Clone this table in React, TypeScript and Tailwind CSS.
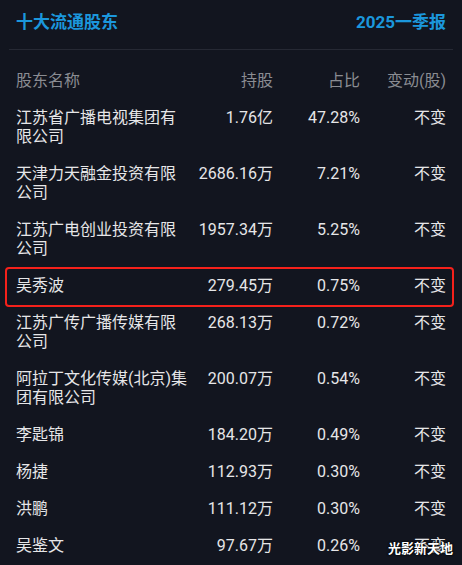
import React from "react";

const rows: [string, string, string, string, boolean?][] = [
  ["江苏省广播电视集团有限公司", "1.76亿", "47.28%", "不变"],
  ["天津力天融金投资有限公司", "2686.16万", "7.21%", "不变"],
  ["江苏广电创业投资有限公司", "1957.34万", "5.25%", "不变"],
  ["吴秀波", "279.45万", "0.75%", "不变", true],
  ["江苏广传广播传媒有限公司", "268.13万", "0.72%", "不变"],
  ["阿拉丁文化传媒(北京)集团有限公司", "200.07万", "0.54%", "不变"],
  ["李匙锦", "184.20万", "0.49%", "不变"],
  ["杨捷", "112.93万", "0.30%", "不变"],
  ["洪鹏", "111.12万", "0.30%", "不变"],
  ["吴鉴文", "97.67万", "0.26%", "不变"],
];

export default function App() {
  return (
    <div
      className="relative w-[462px] h-[565px] overflow-hidden bg-[#12151f]"
      style={{ fontFamily: 'Roboto, "Noto Sans CJK SC", sans-serif' }}
    >
      <div className="h-[49px] pb-[4px] px-4 flex items-center justify-between text-[17px] font-bold text-[#1b97dc]">
        <span>十大流通股东</span>
        <span>2025一季报</span>
      </div>
      <div className="mx-[9px] h-px bg-[#262934]" />
      <div className="mt-[12px] px-4 py-[9px] grid grid-cols-[175px_82px_87px_86px] text-[16px] leading-[19px] text-[#8a8c92]">
        <span>股东名称</span>
        <span className="text-right">持股</span>
        <span className="text-right">占比</span>
        <span className="text-right">变动(股)</span>
      </div>
      {rows.map(([name, hold, pct, chg, hl], i) => (
        <div
          key={i}
          className="relative px-4 py-[9px] grid grid-cols-[175px_82px_87px_86px] text-[16px] leading-[19px] text-[#e6e6e8]"
        >
          <span>{name}</span>
          <span className="text-right">{hold}</span>
          <span className="text-right">{pct}</span>
          <span className="text-right">{chg}</span>
          {hl && (
            <div className="absolute left-[5px] right-[8px] top-0 -bottom-[3px] border-2 border-[#f5211b] rounded-[4px]" />
          )}
        </div>
      ))}
      <div
        className="absolute right-[9px] bottom-[7px] text-[13px] font-bold text-white"
        style={{ textShadow: "0 0 2px #000, 0 0 2px #000" }}
      >
        光影新天地
      </div>
    </div>
  );
}
